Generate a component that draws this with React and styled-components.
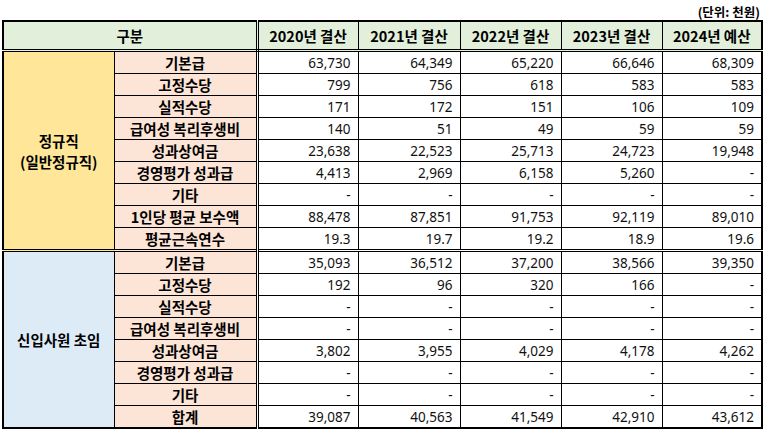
import React from "react";
import styled, { createGlobalStyle } from "styled-components";

const GlobalStyle = createGlobalStyle`
  body {
    margin: 0;
    background: #ffffff;
    font-family: "Noto Sans CJK KR", "Noto Sans", sans-serif;
  }
`;

const columnWidths = [111, 143, 101, 102, 101, 101, 100];

const years = ["2020년 결산", "2021년 결산", "2022년 결산", "2023년 결산", "2024년 예산"];

const sections = [
  {
    title: ["정규직", "(일반정규직)"],
    tone: "#FFE699",
    rows: [
      ["기본급", "63,730", "64,349", "65,220", "66,646", "68,309"],
      ["고정수당", "799", "756", "618", "583", "583"],
      ["실적수당", "171", "172", "151", "106", "109"],
      ["급여성 복리후생비", "140", "51", "49", "59", "59"],
      ["성과상여금", "23,638", "22,523", "25,713", "24,723", "19,948"],
      ["경영평가 성과급", "4,413", "2,969", "6,158", "5,260", "-"],
      ["기타", "-", "-", "-", "-", "-"],
      ["1인당 평균 보수액", "88,478", "87,851", "91,753", "92,119", "89,010"],
      ["평균근속연수", "19.3", "19.7", "19.2", "18.9", "19.6"],
    ],
  },
  {
    title: ["신입사원 초임"],
    tone: "#DDEBF7",
    rows: [
      ["기본급", "35,093", "36,512", "37,200", "38,566", "39,350"],
      ["고정수당", "192", "96", "320", "166", "-"],
      ["실적수당", "-", "-", "-", "-", "-"],
      ["급여성 복리후생비", "-", "-", "-", "-", "-"],
      ["성과상여금", "3,802", "3,955", "4,029", "4,178", "4,262"],
      ["경영평가 성과급", "-", "-", "-", "-", "-"],
      ["기타", "-", "-", "-", "-", "-"],
      ["합계", "39,087", "40,563", "41,549", "42,910", "43,612"],
    ],
  },
];

const App = () => {
  return (
    <Page>
      <GlobalStyle />
      <Unit>(단위: 천원)</Unit>
      <Table>
        <colgroup>
          {columnWidths.map((w, i) => (
            <Col key={i} $width={w} />
          ))}
        </colgroup>
        <thead>
          <tr>
            <HeadCell colSpan={2} $split>
              구분
            </HeadCell>
            {years.map((y) => (
              <HeadCell key={y}>{y}</HeadCell>
            ))}
          </tr>
        </thead>
        <tbody>
          {sections.map((section, si) =>
            section.rows.map((row, ri) => (
              <Row key={si + "-" + ri} $sectionStart={si > 0 && ri === 0}>
                {ri === 0 && (
                  <CategoryCell rowSpan={section.rows.length} $tone={section.tone}>
                    {section.title.map((line) => (
                      <div key={line}>{line}</div>
                    ))}
                  </CategoryCell>
                )}
                <ItemCell>{row[0]}</ItemCell>
                {row.slice(1).map((v, vi) => (
                  <NumCell key={vi}>{v}</NumCell>
                ))}
              </Row>
            ))
          )}
        </tbody>
      </Table>
    </Page>
  );
};

const Page = styled.div`
  width: 764px;
  padding: 4px 0 0 2px;
  box-sizing: border-box;
`;

const Unit = styled.div`
  width: 759px;
  text-align: right;
  font-size: 12.5px;
  font-weight: 700;
  line-height: 16px;
  color: #000;
  box-sizing: border-box;
  padding-right: 1px;
`;

const Table = styled.table`
  border-collapse: collapse;
  table-layout: fixed;
  width: 759px;
  border: 2px solid #000;
  color: #000;
`;

const Col = styled.col`
  width: ${(p) => p.$width}px;
`;

const HeadCell = styled.th`
  height: 27px;
  padding: 0;
  background: #e2efda;
  border: 1px solid #000;
  border-bottom: 3px double #000;
  ${(p) => p.$split && "border-right: 3px double #000;"}
  font-size: 14.5px;
  font-weight: 700;
  line-height: 20px;
  text-align: center;
  white-space: nowrap;
`;

const Row = styled.tr`
  td {
    ${(p) => p.$sectionStart && "border-top: 3px double #000;"}
  }
`;

const CategoryCell = styled.td`
  padding: 0;
  background: ${(p) => p.$tone};
  border: 1px solid #000;
  font-size: 14.5px;
  font-weight: 700;
  line-height: 21px;
  text-align: center;
  vertical-align: middle;
`;

const ItemCell = styled.td`
  height: 21px;
  padding: 0;
  background: #fce4d6;
  border: 1px solid #000;
  border-right: 3px double #000;
  font-size: 14.5px;
  font-weight: 700;
  line-height: 20px;
  text-align: center;
  white-space: nowrap;
`;

const NumCell = styled.td`
  height: 21px;
  padding: 0 7px 0 0;
  background: #ffffff;
  border: 1px solid #000;
  font-family: "Noto Sans", "Open Sans", sans-serif;
  font-size: 13.5px;
  line-height: 20px;
  text-align: right;
  color: #111;
`;

export default App;
